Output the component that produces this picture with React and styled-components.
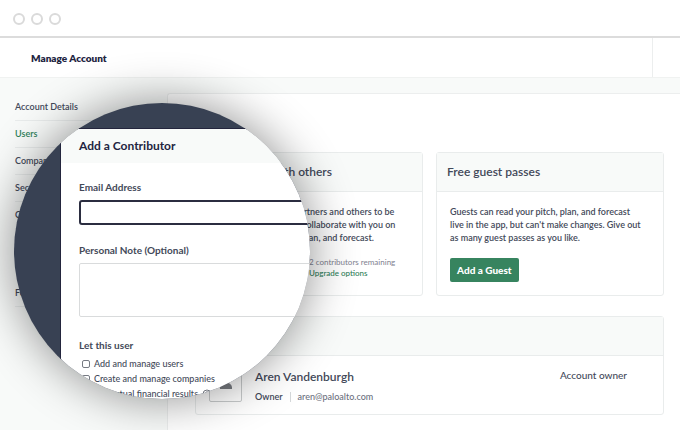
import React from "react";
import styled, { createGlobalStyle } from "styled-components";

const App = () => {
  return (
    <>
      <GlobalStyle />
      <Page>
        <WindowBar>
          <Dot />
          <Dot />
          <Dot />
        </WindowBar>
        <Header>
          <PageTitle>Manage Account</PageTitle>
          <HeaderSlot />
        </Header>
        <Body>
          <Sidebar>
            <NavList>
              {mainLinks.map((label) => (
                <NavItem key={label}>
                  <NavLink href="#" $active={label === "Users"}>
                    {label}
                  </NavLink>
                </NavItem>
              ))}
            </NavList>
            <NavList>
              <NavItem>
                <NavLink href="#">Feedback</NavLink>
              </NavItem>
            </NavList>
          </Sidebar>
          <Content>
            <CardRow>
              <Card>
                <CardHead>
                  <CardTitle $end>Work with others</CardTitle>
                </CardHead>
                <ShareBody>
                  <CardText>
                    Invite your teams, partners and others to be
                    <br />
                    contributors. They'll collaborate with you on
                    <br />
                    your pitch, business plan, and forecast.
                  </CardText>
                  <Remaining>
                    <Muted>2 contributors remaining</Muted>
                    <UpgradeLink href="#">Upgrade options</UpgradeLink>
                  </Remaining>
                </ShareBody>
              </Card>
              <Card>
                <CardHead>
                  <CardTitle>Free guest passes</CardTitle>
                </CardHead>
                <CardBody>
                  <CardText>
                    Guests can read your pitch, plan, and forecast
                    <br />
                    live in the app, but can't make changes. Give out
                    <br />
                    as many guest passes as you like.
                  </CardText>
                  <GuestButton type="button">Add a Guest</GuestButton>
                </CardBody>
              </Card>
            </CardRow>
            <Card>
              <CardHead />
              <UserRow>
                <Avatar>
                  <svg width="16" height="18" viewBox="0 0 16 18">
                    <circle cx="8" cy="6" r="5" fill="#7b7e84" />
                    <path
                      d="M2 18v-1c0-3 2-5 5-5h2c3 0 5 2 5 5v1z"
                      fill="#7b7e84"
                    />
                  </svg>
                </Avatar>
                <UserInfo>
                  <UserName>Aren Vandenburgh</UserName>
                  <UserMeta>
                    <Role>Owner</Role>
                    <Email>aren@paloalto.com</Email>
                  </UserMeta>
                </UserInfo>
                <AccountRole>Account owner</AccountRole>
              </UserRow>
            </Card>
          </Content>
        </Body>
        <Lens>
          <Dialog>
            <DialogHead>
              <DialogTitle>Add a Contributor</DialogTitle>
            </DialogHead>
            <Form>
              <Label htmlFor="email">Email Address</Label>
              <TextInput id="email" type="email" />
              <Label htmlFor="note">Personal Note (Optional)</Label>
              <NoteInput id="note" />
              <Permissions>
                <Legend>Let this user</Legend>
                {permissions.map((item) => (
                  <Option key={item.label}>
                    <Checkbox type="checkbox" />
                    {item.label}
                    {item.help && <HelpIcon />}
                  </Option>
                ))}
              </Permissions>
            </Form>
          </Dialog>
        </Lens>
      </Page>
    </>
  );
};

const HelpIcon = () => (
  <HelpSvg viewBox="0 0 10 10">
    <circle cx="5" cy="5" r="4" fill="none" stroke="#6f747c" />
    <path
      d="M3.7 4a1.3 1.3 0 1 1 1.8 1.2c-.4.2-.5.4-.5.8M5 7v.6"
      fill="none"
      stroke="#6f747c"
      strokeWidth=".8"
    />
  </HelpSvg>
);

const mainLinks = [
  "Account Details",
  "Users",
  "Companies",
  "Security",
  "Connections",
];

const permissions = [
  { label: "Add and manage users" },
  { label: "Create and manage companies" },
  { label: "See actual financial results", help: true },
];

const GlobalStyle = createGlobalStyle`
  * {
    box-sizing: border-box;
    margin: 0;
    padding: 0;
  }

  body {
    font-family: Lato, "Open Sans", sans-serif;
    font-size: 9px;
    color: #434959;
    background-color: #f8faf9;
  }
`;

const Page = styled.div`
  position: relative;
  display: flex;
  flex-direction: column;
  height: 100vh;
  overflow: hidden;
`;

const WindowBar = styled.div`
  display: flex;
  flex-shrink: 0;
  align-items: center;
  gap: 6px;
  height: 38px;
  padding: 2px 13px 0;
  background-color: white;
  border-bottom: 2px solid #dcdcdc;
`;

const Dot = styled.span`
  width: 12px;
  height: 12px;
  border: 2px solid #dadada;
  border-radius: 50%;
`;

const Header = styled.header`
  display: flex;
  flex-shrink: 0;
  align-items: center;
  justify-content: space-between;
  height: 40px;
  padding-left: 31px;
  background-color: white;
  border-bottom: 1px solid #f0f2f1;
`;

const PageTitle = styled.h1`
  font-size: 10px;
  font-weight: 800;
  line-height: 14px;
  color: #22243f;
`;

const HeaderSlot = styled.div`
  align-self: stretch;
  width: 28px;
  border-left: 1px solid #eceeee;
`;

const Body = styled.div`
  display: flex;
  flex: 1;
  padding-top: 15px;
`;

const Sidebar = styled.nav`
  display: flex;
  flex-direction: column;
  gap: 51px;
  width: 167px;
  padding: 1px 15px 0;
`;

const NavList = styled.ul`
  list-style: none;
`;

const NavItem = styled.li`
  display: flex;
  align-items: center;
  height: 27px;
  border-bottom: 1px solid #e9ecec;
`;

const NavLink = styled.a`
  font-weight: 600;
  line-height: 12px;
  text-decoration: none;
  color: ${(props) => (props.$active ? "#2f8059" : "#434959")};
`;

const Content = styled.main`
  flex: 1;
  padding: 58px 16px 16px 27px;
  background-color: white;
  border: 1px solid #eceeee;
  border-right: 0;
  border-radius: 3px 0 0 0;
`;

const CardRow = styled.div`
  display: grid;
  grid-template-columns: 1fr 1fr;
  gap: 13px;
  margin-bottom: 20px;
`;

const Card = styled.section`
  background-color: white;
  border: 1px solid #e9ecec;
  border-radius: 3px;
`;

const CardHead = styled.div`
  display: flex;
  align-items: center;
  height: 39px;
  padding: 0 10px;
  background-color: #f8faf9;
  border-bottom: 1px solid #e9ecec;
`;

const CardTitle = styled.h2`
  width: ${(props) => (props.$end ? "126px" : "auto")};
  font-size: 12px;
  font-weight: 600;
  line-height: 16px;
  text-align: right;
`;

const CardBody = styled.div`
  padding: 13px;
`;

const ShareBody = styled(CardBody)`
  padding-left: 25px;
`;

const CardText = styled.p`
  font-weight: 600;
  line-height: 13px;
  white-space: nowrap;
`;

const Remaining = styled.div`
  display: flex;
  flex-direction: column;
  margin: 13px 0 0 88px;
  font-size: 8px;
  line-height: 11px;
`;

const Muted = styled.span`
  color: #80818f;
`;

const UpgradeLink = styled.a`
  font-weight: 500;
  text-decoration: none;
  color: #2f8059;
`;

const GuestButton = styled.button`
  height: 24px;
  margin-top: 14px;
  padding: 0 7px;
  font: inherit;
  font-size: 10px;
  font-weight: 900;
  color: white;
  background-color: #37845f;
  border: 0;
  border-radius: 2px;
`;

const UserRow = styled.div`
  display: flex;
  align-items: flex-start;
  padding: 12px 36px 12px 13px;
`;

const Avatar = styled.div`
  display: flex;
  justify-content: center;
  width: 33px;
  height: 34px;
  padding-top: 2px;
  border: 1px solid #c9cccd;
  border-radius: 2px;
`;

const UserInfo = styled.div`
  flex: 1;
  margin-left: 13px;
`;

const UserName = styled.h3`
  font-size: 12px;
  font-weight: 600;
  line-height: 18px;
`;

const UserMeta = styled.div`
  display: flex;
  margin-top: 6px;
  line-height: 10px;
`;

const Role = styled.span`
  padding-right: 7px;
  font-weight: 600;
  border-right: 1px solid #d5d8da;
`;

const Email = styled.span`
  padding-left: 7px;
  font-weight: 500;
  color: #6c7180;
`;

const AccountRole = styled.span`
  font-size: 10px;
  font-weight: 500;
  line-height: 14px;
`;

// round magnifier that floats over the page
const Lens = styled.div`
  position: absolute;
  top: 103px;
  left: 14px;
  width: 296px;
  height: 296px;
  padding: 26px 0 0 47px;
  overflow: hidden;
  background-color: #384153;
  border-radius: 50%;
  box-shadow: 0 0 48px rgba(0, 0, 0, 0.45);
`;

const Dialog = styled.div`
  width: 320px;
  height: 320px;
  background-color: white;
  box-shadow: 0 0 0 1px #23253d;
`;

const DialogHead = styled.div`
  padding: 8px 18px;
  background-color: #f8faf9;
`;

const DialogTitle = styled.h2`
  font-size: 12px;
  font-weight: 700;
  line-height: 18px;
  color: #22243f;
`;

const Form = styled.form`
  display: flex;
  flex-direction: column;
  padding: 17px 18px;
`;

const Label = styled.label`
  margin-bottom: 6px;
  font-size: 10px;
  font-weight: 700;
  line-height: 14px;
`;

const TextInput = styled.input`
  height: 25px;
  margin-bottom: 18px;
  border: 2px solid #2b2d40;
  border-radius: 3px;
`;

const NoteInput = styled.textarea`
  height: 54px;
  margin-bottom: 21px;
  border: 1px solid #d9dbdc;
  border-radius: 2px;
  resize: none;
`;

const Permissions = styled.fieldset`
  border: 0;
`;

const Legend = styled.legend`
  margin-bottom: 4px;
  font-size: 10px;
  font-weight: 700;
  line-height: 14px;
`;

const Option = styled.label`
  display: flex;
  align-items: center;
  padding-left: 3px;
  font-weight: 500;
  line-height: 15px;
`;

const Checkbox = styled.input`
  appearance: none;
  width: 8px;
  height: 8px;
  margin-right: 4px;
  border: 1px solid #777b83;
  border-radius: 2px;
`;

const HelpSvg = styled.svg`
  width: 10px;
  height: 10px;
  margin-left: 4px;
`;

export default App;
